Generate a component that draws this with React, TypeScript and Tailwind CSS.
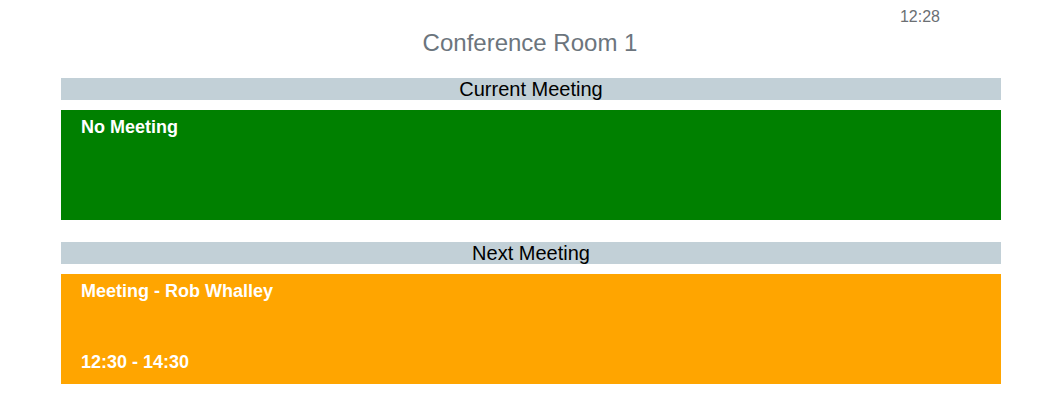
export default function App() {
  return (
    <div
      className="w-[1060px] h-[410px] bg-white pt-[8px]"
      style={{ fontFamily: '"Liberation Sans", Arial, sans-serif' }}
    >
      {/* clock */}
      <div className="pr-[120px] text-right text-[16px] leading-[18px] text-[#6b6f73]">12:28</div>

      {/* room name */}
      <h1 className="mt-[3px] text-center text-[24px] leading-[28px] text-[#6c757d]">Conference Room 1</h1>

      <div className="ml-[61px] mt-[21px] w-[940px]">
        <div className="h-[22px] bg-[#c2d0d7] text-center text-[20px] leading-[22px] text-black">Current Meeting</div>
        <div className="mt-[10px] flex h-[110px] flex-col bg-[#008000] px-[20px] pt-[7px] text-[18px] font-bold leading-[21px] text-white">
          <span>No Meeting</span>
        </div>

        <div className="mt-[22px] h-[22px] bg-[#c2d0d7] text-center text-[20px] leading-[22px] text-black">Next Meeting</div>
        <div className="mt-[10px] flex h-[110px] flex-col justify-between bg-[#ffa500] px-[20px] pb-[11px] pt-[7px] text-[18px] font-bold leading-[21px] text-white">
          <span>Meeting - Rob Whalley</span>
          <span>12:30 - 14:30</span>
        </div>
      </div>
    </div>
  );
}
